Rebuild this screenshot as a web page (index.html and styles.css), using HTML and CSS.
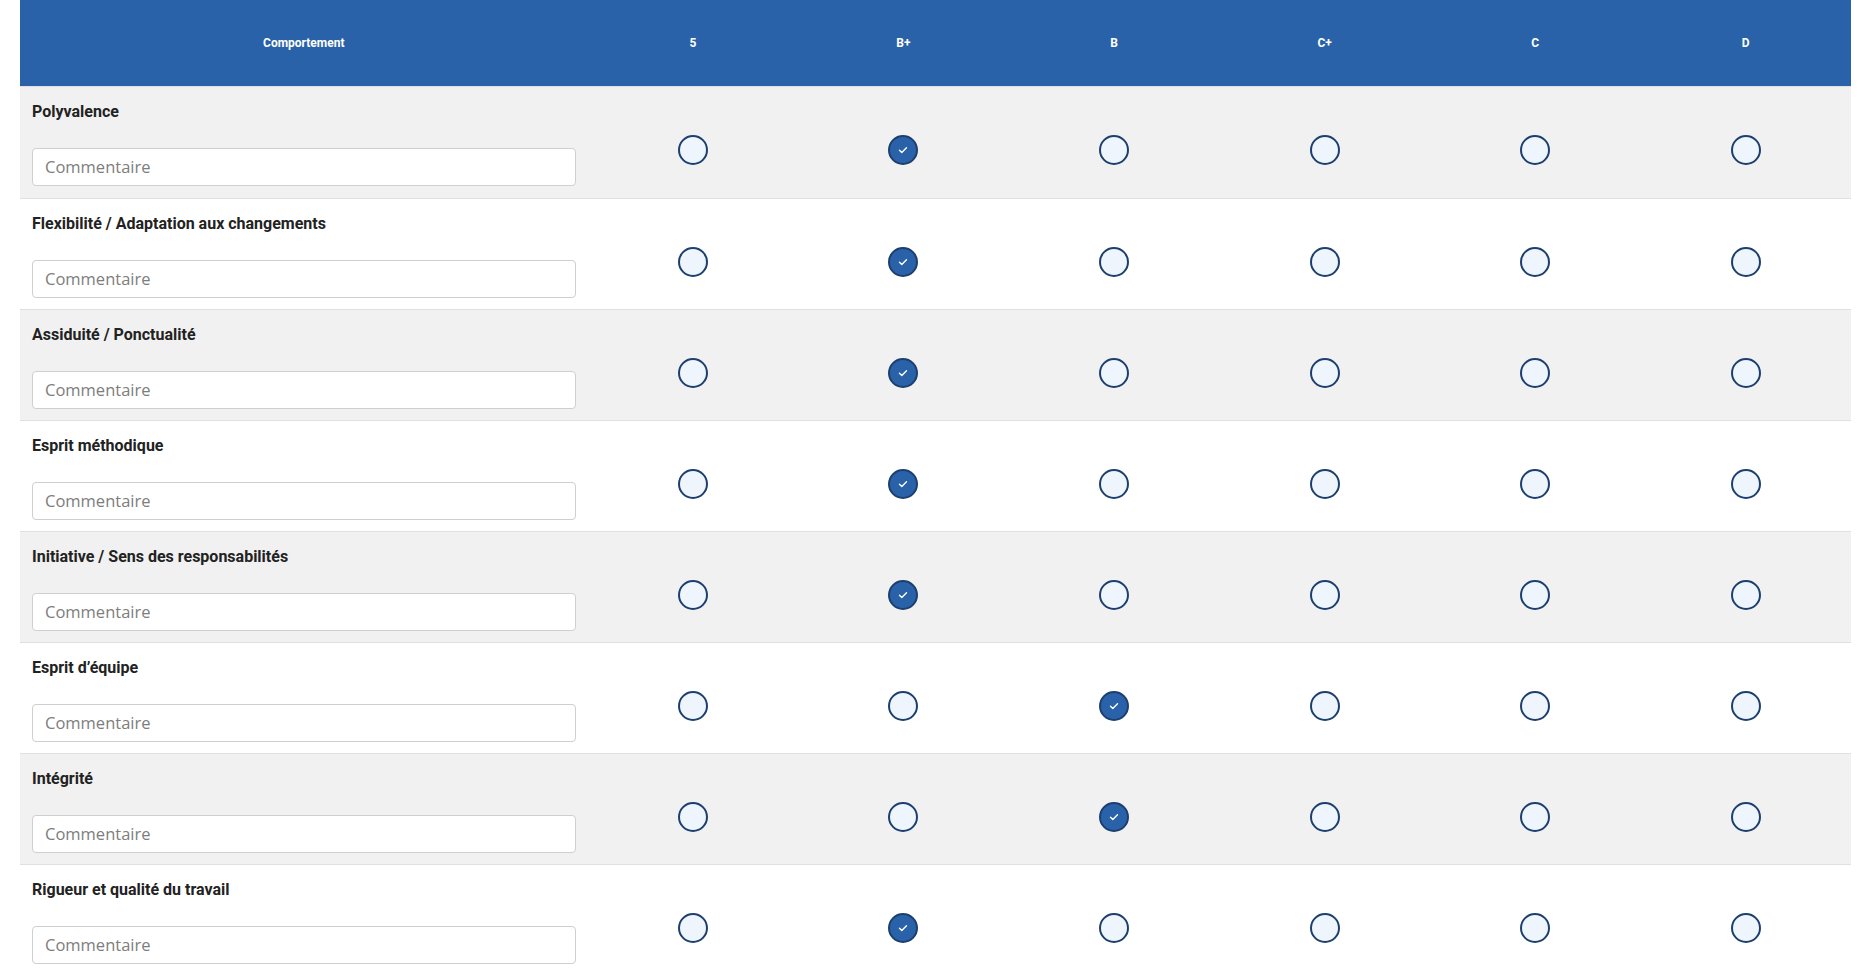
FILE: index.html
```html
<!DOCTYPE html>
<html lang="fr">
<head>
  <meta charset="UTF-8">
  <title>Évaluation - Comportement</title>
  <link rel="stylesheet" href="styles.css">
</head>
<body>
  <div class="wrap">
    <table class="eval-table">
      <thead>
        <tr>
          <th class="col-label">Comportement</th>
          <th>5</th>
          <th>B+</th>
          <th>B</th>
          <th>C+</th>
          <th>C</th>
          <th>D</th>
        </tr>
      </thead>
      <tbody>
        <tr>
          <td class="crit">
            <div class="crit-name">Polyvalence</div>
            <input type="text" class="comment" placeholder="Commentaire">
          </td>
          <td class="rate"><span class="radio"></span></td>
          <td class="rate"><span class="radio checked"><svg viewBox="0 0 12 12"><path d="M2.5 6.3l2.3 2.2 4.7-4.8"/></svg></span></td>
          <td class="rate"><span class="radio"></span></td>
          <td class="rate"><span class="radio"></span></td>
          <td class="rate"><span class="radio"></span></td>
          <td class="rate"><span class="radio"></span></td>
        </tr>
        <tr>
          <td class="crit">
            <div class="crit-name">Flexibilité / Adaptation aux changements</div>
            <input type="text" class="comment" placeholder="Commentaire">
          </td>
          <td class="rate"><span class="radio"></span></td>
          <td class="rate"><span class="radio checked"><svg viewBox="0 0 12 12"><path d="M2.5 6.3l2.3 2.2 4.7-4.8"/></svg></span></td>
          <td class="rate"><span class="radio"></span></td>
          <td class="rate"><span class="radio"></span></td>
          <td class="rate"><span class="radio"></span></td>
          <td class="rate"><span class="radio"></span></td>
        </tr>
        <tr>
          <td class="crit">
            <div class="crit-name">Assiduité / Ponctualité</div>
            <input type="text" class="comment" placeholder="Commentaire">
          </td>
          <td class="rate"><span class="radio"></span></td>
          <td class="rate"><span class="radio checked"><svg viewBox="0 0 12 12"><path d="M2.5 6.3l2.3 2.2 4.7-4.8"/></svg></span></td>
          <td class="rate"><span class="radio"></span></td>
          <td class="rate"><span class="radio"></span></td>
          <td class="rate"><span class="radio"></span></td>
          <td class="rate"><span class="radio"></span></td>
        </tr>
        <tr>
          <td class="crit">
            <div class="crit-name">Esprit méthodique</div>
            <input type="text" class="comment" placeholder="Commentaire">
          </td>
          <td class="rate"><span class="radio"></span></td>
          <td class="rate"><span class="radio checked"><svg viewBox="0 0 12 12"><path d="M2.5 6.3l2.3 2.2 4.7-4.8"/></svg></span></td>
          <td class="rate"><span class="radio"></span></td>
          <td class="rate"><span class="radio"></span></td>
          <td class="rate"><span class="radio"></span></td>
          <td class="rate"><span class="radio"></span></td>
        </tr>
        <tr>
          <td class="crit">
            <div class="crit-name">Initiative / Sens des responsabilités</div>
            <input type="text" class="comment" placeholder="Commentaire">
          </td>
          <td class="rate"><span class="radio"></span></td>
          <td class="rate"><span class="radio checked"><svg viewBox="0 0 12 12"><path d="M2.5 6.3l2.3 2.2 4.7-4.8"/></svg></span></td>
          <td class="rate"><span class="radio"></span></td>
          <td class="rate"><span class="radio"></span></td>
          <td class="rate"><span class="radio"></span></td>
          <td class="rate"><span class="radio"></span></td>
        </tr>
        <tr>
          <td class="crit">
            <div class="crit-name">Esprit d’équipe</div>
            <input type="text" class="comment" placeholder="Commentaire">
          </td>
          <td class="rate"><span class="radio"></span></td>
          <td class="rate"><span class="radio"></span></td>
          <td class="rate"><span class="radio checked"><svg viewBox="0 0 12 12"><path d="M2.5 6.3l2.3 2.2 4.7-4.8"/></svg></span></td>
          <td class="rate"><span class="radio"></span></td>
          <td class="rate"><span class="radio"></span></td>
          <td class="rate"><span class="radio"></span></td>
        </tr>
        <tr>
          <td class="crit">
            <div class="crit-name">Intégrité</div>
            <input type="text" class="comment" placeholder="Commentaire">
          </td>
          <td class="rate"><span class="radio"></span></td>
          <td class="rate"><span class="radio"></span></td>
          <td class="rate"><span class="radio checked"><svg viewBox="0 0 12 12"><path d="M2.5 6.3l2.3 2.2 4.7-4.8"/></svg></span></td>
          <td class="rate"><span class="radio"></span></td>
          <td class="rate"><span class="radio"></span></td>
          <td class="rate"><span class="radio"></span></td>
        </tr>
        <tr>
          <td class="crit">
            <div class="crit-name">Rigueur et qualité du travail</div>
            <input type="text" class="comment" placeholder="Commentaire">
          </td>
          <td class="rate"><span class="radio"></span></td>
          <td class="rate"><span class="radio checked"><svg viewBox="0 0 12 12"><path d="M2.5 6.3l2.3 2.2 4.7-4.8"/></svg></span></td>
          <td class="rate"><span class="radio"></span></td>
          <td class="rate"><span class="radio"></span></td>
          <td class="rate"><span class="radio"></span></td>
          <td class="rate"><span class="radio"></span></td>
        </tr>
      </tbody>
    </table>
  </div>
</body>
</html>
```

FILE: styles.css
```css
body {
  margin: 0;
  padding: 0;
  font-family: Roboto, "Liberation Sans", Arial, sans-serif;
  background-color: #fff;
  color: #212121;
}

.wrap {
  padding: 0 23px 0 20px;
}

.eval-table {
  width: 100%;
  border-collapse: collapse;
  table-layout: fixed;
}

.eval-table thead th {
  background-color: #2962a8;
  color: #fff;
  font-size: 12px;
  font-weight: 700;
  height: 86px;
  padding: 0;
  text-align: center;
  vertical-align: middle;
  width: 11.5%;
}

.eval-table thead th.col-label {
  width: 31%;
}

.eval-table tbody tr {
  border-top: 1px solid #e0e0e0;
}

.eval-table tbody tr:nth-child(odd) {
  background-color: #f1f1f1;
}

.eval-table tbody tr:nth-child(even) {
  background-color: #fff;
}

.crit {
  padding: 13px 12px 11px;
  vertical-align: top;
}

.eval-table tbody tr:first-child .crit {
  padding-bottom: 12px;
}

.crit-name {
  font-size: 16px;
  font-weight: 700;
  line-height: 24px;
  margin-bottom: 24px;
  color: #222;
}

.comment {
  display: block;
  box-sizing: border-box;
  width: 100%;
  height: 38px;
  padding: 0 12px 2px;
  border: 1px solid #cfcfcf;
  border-radius: 4px;
  background: #fff;
  font-family: "Open Sans", "Noto Sans", sans-serif;
  font-size: 16.5px;
  color: #333;
}

.comment::placeholder {
  color: #7d7d7d;
}

.rate {
  text-align: center;
  vertical-align: middle;
  padding: 15px 0 0;
}

.radio {
  display: inline-flex;
  align-items: center;
  justify-content: center;
  box-sizing: border-box;
  width: 30px;
  height: 30px;
  border: 2px solid #1c3f6f;
  border-radius: 50%;
  background-color: #eef5fd;
  vertical-align: middle;
}

.radio.checked {
  background-color: #2962a8;
}

.radio svg {
  width: 12px;
  height: 12px;
  fill: none;
  stroke: #fff;
  stroke-width: 1.4;
  stroke-linecap: round;
  stroke-linejoin: round;
}
```
